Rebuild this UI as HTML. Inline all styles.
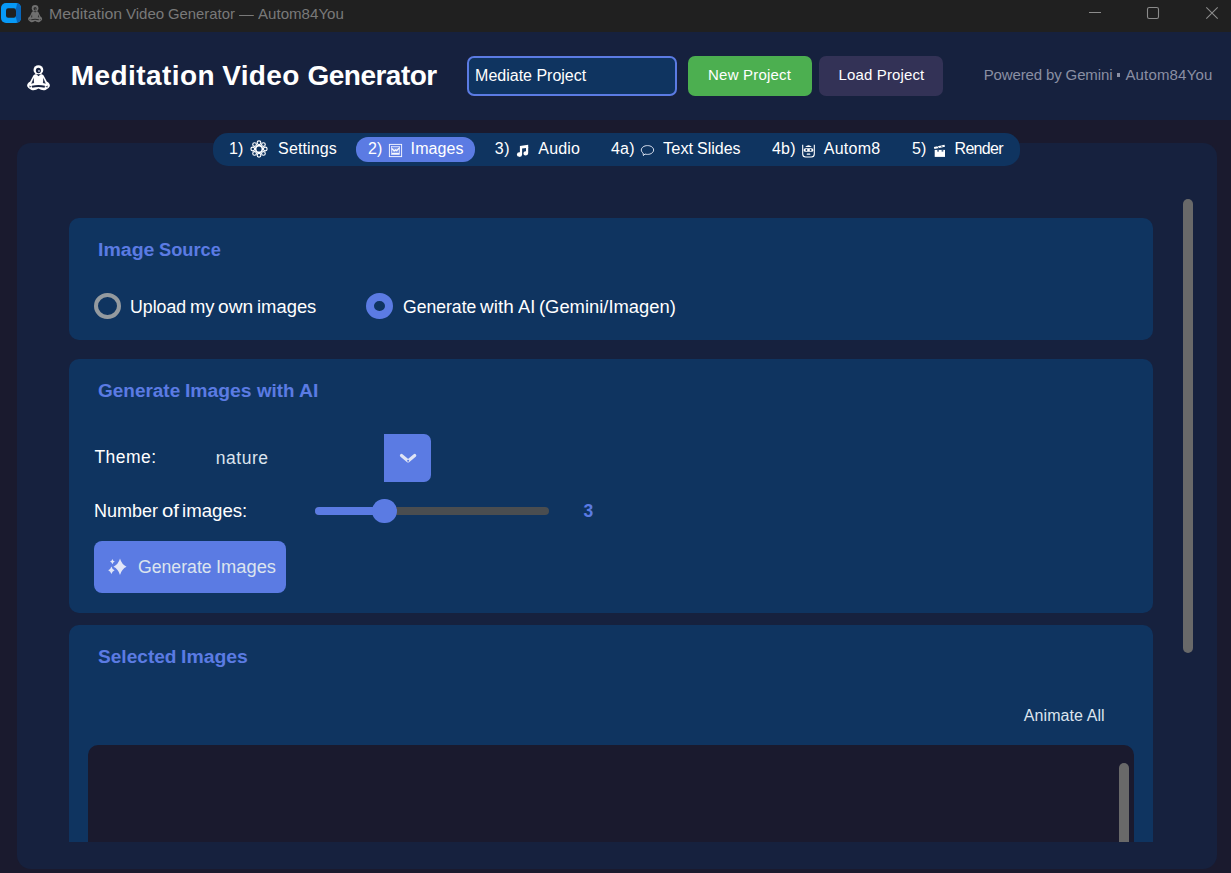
<!DOCTYPE html>
<html>
<head>
<meta charset="utf-8">
<title>Meditation Video Generator</title>
<style>
*{margin:0;padding:0;box-sizing:border-box;}
html,body{width:1231px;height:873px;overflow:hidden;background:#1a1a2e;}
body{position:relative;font-family:"Liberation Sans",sans-serif;color:#fff;}
.abs{position:absolute;}
.t{position:absolute;white-space:nowrap;line-height:1;}
#titlebar{left:0;top:0;width:1231px;height:32px;background:#202020;}
#header{left:0;top:32px;width:1231px;height:88px;background:#16213e;}
#tabframe{left:17px;top:143px;width:1200px;height:725.600px;background:#16213e;border-radius:14px;}
#seg{left:213px;top:133px;width:807px;height:33px;background:#0f3460;border-radius:15px;}
#segsel{left:356px;top:137px;width:119px;height:25px;background:#5b7be3;border-radius:12px;}
.card{background:#0f3460;border-radius:10px;}
.acc{color:#5b7be3;font-weight:bold;}
</style>
</head>
<body>
<!-- window title bar -->
<div id="titlebar" class="abs"></div>
<svg class="abs" style="left:1px;top:3px" width="20" height="20" viewBox="0 0 20 20">
  <defs><clipPath id="appclip"><rect x="0" y="0" width="20" height="20" rx="5"/></clipPath></defs>
  <g clip-path="url(#appclip)">
    <rect x="0" y="0" width="20" height="20" fill="#0799f6"/>
    <path d="M16.300 0h3.700v20h-3.700l-1.300-5.300v-9.500z" fill="#0767bd"/>
  </g>
  <rect x="5" y="5.200" width="10" height="9.500" rx="2.200" fill="#202020"/>
</svg>
<svg class="abs" style="left:27px;top:4px" width="17" height="20" viewBox="0 0 17 20">
  <g transform="translate(0.274 0.286) scale(0.6261 0.6786)">
  <ellipse cx="12.500" cy="5.900" rx="5.300" ry="4.700" fill="#707070"/>
  <ellipse cx="12.500" cy="6.600" rx="2.500" ry="2.600" fill="#2b2b2b"/>
  <circle cx="13.000" cy="7.000" r="0.900" fill="#6a6a6a"/>
  <path d="M9.0 10.3 Q7.0 11.0 6.3 13.5 L4.2 17.5 Q0.6 19.6 1.2 22.2 Q2.0 24.5 5.5 26.0 Q9.0 27.0 12.5 24.6 Q16.0 27.0 19.5 26.0 Q23.0 24.5 23.8 22.2 Q24.4 19.6 20.8 17.5 L18.7 13.5 Q18.0 11.0 16.0 10.3 Z" fill="#707070"/>
  <path d="M10.400 10.300h4.300l-2.150 1.900z" fill="#2b2b2b"/>
  <path d="M7.600 14.600l-1.900 4.900 2.300-0.500zM17.400 14.600l1.900 4.900-2.300-0.500z" fill="#2b2b2b" opacity="0.900"/>
  <path d="M6.200 22.000q6.300-1.300 12.400 0l-0.300 1.400q-5.900-1.200-11.800 0z" fill="#2b2b2b"/>
  <path d="M3.300 21.600l2.600 1.200-2.300 0.600zM21.800 21.600l-2.600 1.200 2.300 0.600z" fill="#2b2b2b" opacity="0.800"/>
</g>
</svg>
<span class="t" id="tb_text" style="left:49.38px;top:6.30px;font-size:15px;color:#797979;transform:scaleX(1.0572);transform-origin:0 0;">Meditation</span>
<span class="t" id="tb_text_w1" style="left:126.31px;top:6.30px;font-size:15px;color:#797979;transform:scaleX(1.0024);transform-origin:0 0;">Video</span>
<span class="t" id="tb_text_w2" style="left:168.29px;top:6.30px;font-size:15px;color:#797979;transform:scaleX(0.9897);transform-origin:0 0;">Generator</span>
<span class="t" id="tb_text_w3" style="left:239.21px;top:6.30px;font-size:15px;color:#797979;transform:scaleX(0.9856);transform-origin:0 0;">—</span>
<span class="t" id="tb_text_w4" style="left:258.34px;top:6.30px;font-size:15px;color:#797979;transform:scaleX(1.0058);transform-origin:0 0;">Autom84You</span>
<!-- window controls -->
<svg class="abs" style="left:1080px;top:0" width="151" height="32" viewBox="0 0 151 32">
  <path d="M9 12.5h12" stroke="#8c8c8c" stroke-width="1" fill="none"/>
  <rect x="67.500" y="7.500" width="11" height="11" rx="1.800" stroke="#8c8c8c" stroke-width="1.100" fill="none"/>
  <path d="M126.300 7.300l11.400 11.400M137.700 7.300l-11.400 11.400" stroke="#8c8c8c" stroke-width="1.100" fill="none"/>
</svg>

<!-- header -->
<div id="header" class="abs"></div>
<span class="t" id="h_title" style="left:70.85px;top:62.30px;font-size:28px;font-weight:bold;letter-spacing:0.424px;">Meditation</span>
<span class="t" id="h_title2" style="left:222.24px;top:62.30px;font-size:28px;font-weight:bold;letter-spacing:0.331px;">Video</span>
<span class="t" id="h_title3" style="left:307.50px;top:62.30px;font-size:28px;font-weight:bold;letter-spacing:-0.514px;">Generator</span>
<svg class="abs" style="left:26px;top:64px" width="26" height="28" viewBox="0 0 26 28">
  <ellipse cx="12.400" cy="5.900" rx="4.900" ry="4.700" fill="#fff"/>
  <ellipse cx="12.400" cy="6.500" rx="2.500" ry="2.800" fill="#16213e"/>
  <circle cx="13.000" cy="7.000" r="0.900" fill="#b9c3d8"/>
  <path d="M9.0 10.3 Q7.0 11.0 6.3 13.5 L4.2 17.5 Q0.6 19.6 1.2 22.2 Q2.0 24.5 5.5 26.0 Q9.0 27.0 12.5 24.6 Q16.0 27.0 19.5 26.0 Q23.0 24.5 23.8 22.2 Q24.4 19.6 20.8 17.5 L18.7 13.5 Q18.0 11.0 16.0 10.3 Z" fill="#fff"/>
  <path d="M10.400 10.300h4.300l-2.150 1.900z" fill="#16213e"/>
  <path d="M7.700 13.800l-2.500 5.900 2.900-0.700zM17.300 13.800l2.500 5.900-2.900-0.700z" fill="#16213e" opacity="0.900"/>
  <path d="M5.800 21.700q6.700-1.200 13.200 0l-0.400 2.000q-6.200-1.300-12.400 0z" fill="#16213e"/>
  <path d="M3.300 21.600l2.600 1.200-2.300 0.600zM21.800 21.600l-2.600 1.200 2.300 0.600z" fill="#16213e" opacity="0.800"/>
</svg>
<div class="abs" style="left:467px;top:56px;width:210px;height:40px;background:#0f3460;border:2px solid #5b7be3;border-radius:7px;"></div>
<span class="t" id="h_entry" style="left:475.10px;top:67.76px;font-size:16px;letter-spacing:-0.008px;">Mediate Project</span>
<div class="abs" style="left:688px;top:56px;width:124px;height:40px;background:#4caf50;border-radius:7px;"></div>
<span class="t" id="h_new" style="left:708.10px;top:66.80px;font-size:15px;letter-spacing:0.190px;">New Project</span>
<div class="abs" style="left:819px;top:56px;width:124px;height:40px;background:#333256;border-radius:7px;"></div>
<span class="t" id="h_load" style="left:838.60px;top:66.80px;font-size:15px;letter-spacing:0.130px;">Load Project</span>
<span class="t" id="h_pow" style="left:983.70px;top:66.90px;font-size:15px;color:#8a8fa3;letter-spacing:-0.132px;">Powered by Gemini</span>
<div class="abs" style="left:1117.300px;top:73.400px;width:3.200px;height:3.200px;background:#8a8fa3;"></div>
<span class="t" id="h_pow2" style="left:1125.40px;top:66.90px;font-size:15px;color:#8a8fa3;letter-spacing:0.172px;">Autom84You</span>

<!-- tab frame -->
<div id="tabframe" class="abs"></div>
<div id="seg" class="abs"></div>
<div id="segsel" class="abs"></div>
<svg class="abs" style="left:249px;top:138.500px" width="20" height="20" viewBox="0 0 20 20">
  <g fill="none" stroke="#fff" stroke-width="1.150"><circle cx="10.00" cy="3.75" r="1.850"/><circle cx="14.42" cy="5.58" r="1.850"/><circle cx="16.25" cy="10.00" r="1.850"/><circle cx="14.42" cy="14.42" r="1.850"/><circle cx="10.00" cy="16.25" r="1.850"/><circle cx="5.58" cy="14.42" r="1.850"/><circle cx="3.75" cy="10.00" r="1.850"/><circle cx="5.58" cy="5.58" r="1.850"/></g>
  <circle cx="10" cy="10" r="3.350" fill="none" stroke="#fff" stroke-width="1.600"/>
</svg>
<svg class="abs" style="left:388px;top:143px" width="15" height="15" viewBox="0 0 15 15">
  <rect x="1.400" y="1.400" width="12.200" height="12.200" fill="none" stroke="#f3f5ff" stroke-width="0.950"/>
  <rect x="3.400" y="3.400" width="8.200" height="8.200" fill="#fff" fill-opacity="0.220" stroke="#e9edff" stroke-width="0.700"/>
  <path d="M3.600 4.600l2.700 2.300 1.300-0.900 1.000 0.700 2.900-2.600v1.700l-2.800 2.600-1.100-0.700-1.400 1.000-2.600-2.200z" fill="#fff" opacity="0.950"/>
  <rect x="3.900" y="9.900" width="7.200" height="1.300" fill="#fff" opacity="0.950"/>
</svg>
<svg class="abs" style="left:516px;top:144px" width="13" height="13" viewBox="0 0 13 13">
  <path d="M3.900 1.900l8.300-1.100v2.900l-6.100 0.900v6.000a2.600 2.300 0 1 1-2.200-2.300z" fill="#fff"/>
  <path d="M10.000 3.000h2.200v6.300a2.400 2.150 0 1 1-2.200-2.150z" fill="#fff"/>
</svg>
<svg class="abs" style="left:640px;top:144px" width="15" height="13" viewBox="0 0 15 13">
  <path d="M7.500 1.600c3.400 0 6.100 1.900 6.100 4.400s-2.700 4.400-6.100 4.400c-0.900 0-1.700-0.100-2.500-0.400l-1.600 1.600-0.300-2.500c-1.100-0.800-1.800-1.900-1.800-3.100c0-2.500 2.800-4.400 6.200-4.400z" fill="none" stroke="#dfe5f3" stroke-width="1"/>
</svg>
<svg class="abs" style="left:801px;top:144px" width="15" height="14" viewBox="0 0 15 14">
  <path d="M1.700 0.800v9.200q0 3 3 3h5.600q3 0 3-3v-9.200" fill="none" stroke="#fff" stroke-width="1.100"/>
  <path d="M4.200 3.000q3.300-3.600 6.600 0z" fill="#fff"/>
  <rect x="2.700" y="4.300" width="9.600" height="3.500" rx="1.600" fill="#fff"/>
  <circle cx="5.400" cy="6.000" r="0.950" fill="#0f3460"/><circle cx="9.600" cy="6.000" r="0.950" fill="#0f3460"/>
  <rect x="5.700" y="9.600" width="3.600" height="1.100" rx="0.500" fill="#fff"/>
</svg>
<svg class="abs" style="left:933px;top:144px" width="13" height="14" viewBox="0 0 13 14">
  <path d="M0.900 3.000l10.600-2.300 0.500 2.000-10.600 2.400z" fill="#fff"/>
  <rect x="1.700" y="5.900" width="10.300" height="7.000" fill="#fff"/>
  <path d="M4.200 6.300h1.700v1.200h-1.700zM8.600 6.300h1.700v1.200h-1.700z" fill="#0f3460"/>
  <path d="M4.500 2.300l1.300 1.500M8.000 1.500l1.300 1.500" stroke="#0f3460" stroke-width="0.800"/>
</svg>
<span class="t tab" id="tab1a" style="left:229.00px;top:141.46px;font-size:16px;letter-spacing:0.000px;">1)</span>
<span class="t tab" id="tab1b" style="left:278.10px;top:141.46px;font-size:16px;letter-spacing:0.129px;">Settings</span>
<span class="t tab" id="tab2a" style="left:368.10px;top:141.46px;font-size:16px;letter-spacing:-0.100px;">2)</span>
<span class="t tab" id="tab2b" style="left:410.60px;top:141.46px;font-size:16px;letter-spacing:0.100px;">Images</span>
<span class="t tab" id="tab3a" style="left:494.80px;top:141.46px;font-size:16px;letter-spacing:0.600px;">3)</span>
<span class="t tab" id="tab3b" style="left:538.30px;top:141.46px;font-size:16px;letter-spacing:0.175px;">Audio</span>
<span class="t tab" id="tab4a" style="left:610.90px;top:141.46px;font-size:16px;letter-spacing:0.250px;">4a)</span>
<span class="t tab" id="tab4b" style="left:662.74px;top:141.46px;font-size:16px;transform:scaleX(1.0289);transform-origin:0 0;">Text</span>
<span class="t tab" id="tab4b_w1" style="left:696.80px;top:141.46px;font-size:16px;transform:scaleX(0.9986);transform-origin:0 0;">Slides</span>
<span class="t tab" id="tab5a" style="left:771.90px;top:141.46px;font-size:16px;letter-spacing:0.250px;">4b)</span>
<span class="t tab" id="tab5b" style="left:823.70px;top:141.46px;font-size:16px;letter-spacing:0.280px;">Autom8</span>
<span class="t tab" id="tab6a" style="left:912.00px;top:141.46px;font-size:16px;letter-spacing:0.000px;">5)</span>
<span class="t tab" id="tab6b" style="left:954.60px;top:141.46px;font-size:16px;letter-spacing:-0.720px;">Render</span>

<!-- scroll content clip -->
<div class="abs" style="left:17px;top:190px;width:1199px;height:652px;overflow:hidden;">
  <div class="abs card" style="left:52px;top:28px;width:1084px;height:122px;"></div>
  <div class="abs card" style="left:52px;top:169px;width:1084px;height:254px;"></div>
  <div class="abs card" style="left:52px;top:435px;width:1084px;height:300px;"></div>
  <div class="abs" style="left:71px;top:555px;width:1046px;height:200px;background:#1a1a2e;border-radius:10px;"></div>
  <div class="abs" style="left:1102px;top:572.500px;width:10px;height:200px;background:#696969;border-radius:5px;"></div>
</div>
<!-- main scrollbar -->
<div class="abs" style="left:1183px;top:198.700px;width:10px;height:454px;background:#696969;border-radius:5px;"></div>

<!-- card 1 -->
<span class="t acc" id="c1_title" style="left:97.67px;top:240.56px;font-size:18px;transform:scaleX(1.0845);transform-origin:0 0;">Image</span>
<span class="t acc" id="c1_title_w1" style="left:159.27px;top:240.56px;font-size:18px;transform:scaleX(1.0141);transform-origin:0 0;">Source</span>
<div class="abs" style="left:94px;top:292.700px;width:27px;height:26.400px;border:4px solid #949a9f;border-radius:50%;"></div>
<span class="t" id="c1_r1" style="left:129.65px;top:298.59px;font-size:17.5px;transform:scaleX(1.0123);transform-origin:0 0;">Upload</span>
<span class="t" id="c1_r1_w1" style="left:189.52px;top:298.59px;font-size:17.5px;transform:scaleX(1.0529);transform-origin:0 0;">my</span>
<span class="t" id="c1_r1_w2" style="left:218.44px;top:298.59px;font-size:17.5px;transform:scaleX(1.0933);transform-origin:0 0;">own</span>
<span class="t" id="c1_r1_w3" style="left:256.64px;top:298.59px;font-size:17.5px;transform:scaleX(1.0515);transform-origin:0 0;">images</span>
<div class="abs" style="left:365.700px;top:292.700px;width:27px;height:26.400px;border:8px solid #5b7be3;border-radius:50%;"></div>
<span class="t" id="c1_r2" style="left:402.52px;top:298.59px;font-size:17.5px;transform:scaleX(1.0046);transform-origin:0 0;">Generate</span>
<span class="t" id="c1_r2_w1" style="left:480.13px;top:298.59px;font-size:17.5px;transform:scaleX(1.0819);transform-origin:0 0;">with</span>
<span class="t" id="c1_r2_w2" style="left:518.04px;top:298.59px;font-size:17.5px;transform:scaleX(1.0425);transform-origin:0 0;">AI</span>
<span class="t" id="c1_r2_w3" style="left:538.69px;top:298.59px;font-size:17.5px;transform:scaleX(1.0497);transform-origin:0 0;">(Gemini/Imagen)</span>

<!-- card 2 -->
<span class="t acc" id="c2_title" style="left:97.77px;top:381.76px;font-size:18px;transform:scaleX(1.0536);transform-origin:0 0;">Generate</span>
<span class="t acc" id="c2_title_w1" style="left:184.69px;top:381.76px;font-size:18px;transform:scaleX(1.0739);transform-origin:0 0;">Images</span>
<span class="t acc" id="c2_title_w2" style="left:256.74px;top:381.76px;font-size:18px;transform:scaleX(1.0422);transform-origin:0 0;">with</span>
<span class="t acc" id="c2_title_w3" style="left:298.78px;top:381.76px;font-size:18px;transform:scaleX(1.0750);transform-origin:0 0;">AI</span>
<span class="t" id="c2_theme" style="left:94.40px;top:449.19px;font-size:17.5px;letter-spacing:0.460px;">Theme:</span>
<span class="t" id="c2_nature" style="color:#dce4ee;left:215.80px;top:449.59px;font-size:17.5px;letter-spacing:0.520px;">nature</span>
<div class="abs" style="left:384px;top:434px;width:47px;height:48px;background:#5b7be3;border-radius:0 7px 7px 0;"></div>
<svg class="abs" style="left:398px;top:452px" width="20" height="13" viewBox="0 0 20 13"><path d="M3.500 3.500l6.600 5.400 6.600-5.400" stroke="#dfe4f5" stroke-width="3.200" fill="none" stroke-linecap="round" stroke-linejoin="round"/><circle cx="10.100" cy="8.700" r="1.000" fill="#5b7be3"/></svg>
<span class="t" id="c2_num" style="left:93.55px;top:502.69px;font-size:17.5px;transform:scaleX(1.0274);transform-origin:0 0;">Number</span>
<span class="t" id="c2_num_w1" style="left:162.29px;top:502.69px;font-size:17.5px;transform:scaleX(1.1601);transform-origin:0 0;">of</span>
<span class="t" id="c2_num_w2" style="left:182.48px;top:502.69px;font-size:17.5px;transform:scaleX(1.0650);transform-origin:0 0;">images:</span>
<div class="abs" style="left:315px;top:507px;width:234px;height:8px;background:#4a4d50;border-radius:4px;"></div>
<div class="abs" style="left:315px;top:507px;width:70px;height:8px;background:#5b7be3;border-radius:4px;"></div>
<div class="abs" style="left:372px;top:498.700px;width:24.600px;height:24.600px;background:#5b7be3;border-radius:50%;"></div>
<span class="t acc" id="c2_three" style="left:583.50px;top:502.69px;font-size:17.5px;">3</span>
<div class="abs" style="left:94px;top:541px;width:192px;height:52px;background:#5b7be3;border-radius:8px;"></div>
<svg class="abs" style="left:106px;top:557px" width="22" height="20" viewBox="0 0 22 20">
  <path d="M14.00 1.60 Q15.76 7.59 20.50 9.80 Q15.76 12.01 14.00 18.00 Q12.24 12.01 7.50 9.80 Q12.24 7.59 14.00 1.60Z M5.40 9.40 Q6.17 12.29 8.60 13.20 Q6.17 14.11 5.40 17.00 Q4.63 14.11 2.20 13.20 Q4.63 12.29 5.40 9.40Z M6.40 2.00 Q6.93 4.03 8.80 4.60 Q6.93 5.17 6.40 7.20 Q5.87 5.17 4.00 4.60 Q5.87 4.03 6.40 2.00Z" fill="#e1e6f8"/>
</svg>
<span class="t" id="c2_gen" style="left:138.22px;top:558.99px;font-size:17.5px;color:#dce4ee;transform:scaleX(1.0088);transform-origin:0 0;">Generate</span>
<span class="t" id="c2_gen_w1" style="left:216.26px;top:558.99px;font-size:17.5px;color:#dce4ee;transform:scaleX(1.0450);transform-origin:0 0;">Images</span>

<!-- card 3 -->
<span class="t acc" id="c3_title" style="left:97.98px;top:648.46px;font-size:18px;transform:scaleX(1.0605);transform-origin:0 0;">Selected</span>
<span class="t acc" id="c3_title_w1" style="left:180.58px;top:648.46px;font-size:18px;transform:scaleX(1.0788);transform-origin:0 0;">Images</span>
<span class="t" id="c3_anim" style="left:1023.80px;top:708.16px;font-size:16px;color:#dce4ee;letter-spacing:0.080px;">Animate All</span>
</body>
</html>
